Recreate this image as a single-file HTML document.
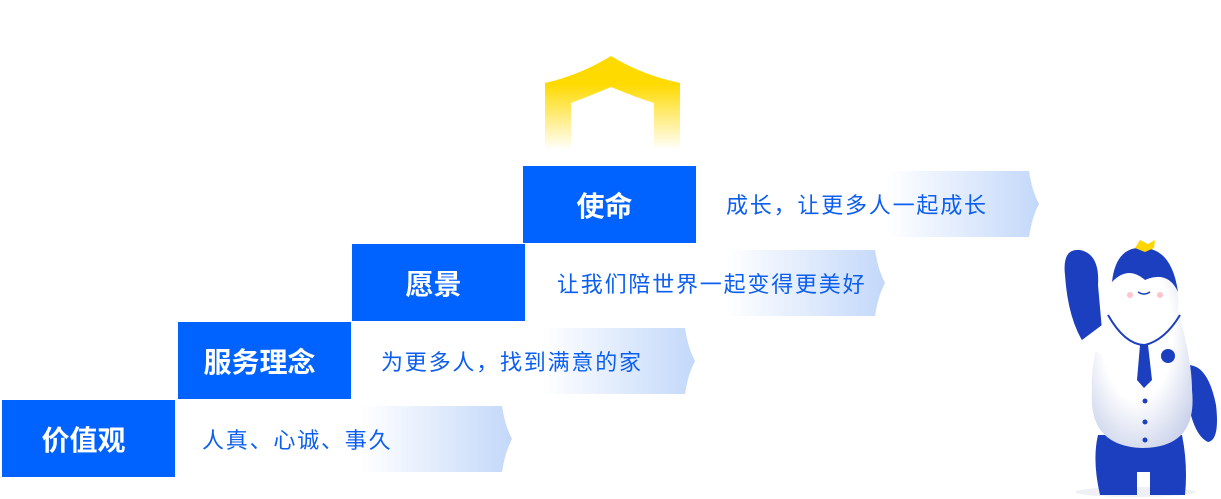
<!DOCTYPE html>
<html><head><meta charset="utf-8"><style>
body{margin:0;width:1221px;height:499px;background:#fff;position:relative;overflow:hidden;font-family:"Liberation Sans","Noto Sans CJK SC",sans-serif}
.box{position:absolute;width:173px;height:77px;background:#0062ff;color:#fff;font-weight:bold;font-size:28px;display:flex;align-items:center;justify-content:center}
.box span{position:relative;left:-5px}
.band{position:absolute;height:66px;color:#0b5ef0;font-size:22px;letter-spacing:1.8px;display:flex;align-items:center}
.band svg{position:absolute;left:0;top:0}
.band span{position:relative;padding-left:26px}
</style></head><body>
<svg style="position:absolute;left:540px;top:50px" width="150" height="110">
<defs><linearGradient id="y" x1="0" y1="0" x2="0" y2="1"><stop offset="0.3" stop-color="#ffda00"/><stop offset="1" stop-color="#ffda00" stop-opacity="0"/></linearGradient></defs>
<path d="M5 33 Q40 25 71 6 Q102 25 140 33 L140 100 L114 100 L114 53 Q95 47 71 37 Q47 47 31 53 L31 100 L5 100 Z" fill="url(#y)"/>
</svg>

<div class="box" style="left:2px;top:400px"><span>价值观</span></div>
<div class="box" style="left:178px;top:322px"><span>服务理念</span></div>
<div class="box" style="left:352px;top:244px"><span>愿景</span></div>
<div class="box" style="left:523px;top:166px"><span>使命</span></div>

<svg width="0" height="0" style="position:absolute"><defs><linearGradient id="b" x1="0" y1="0" x2="1" y2="0"><stop offset="0.55" stop-color="#fff"/><stop offset="1" stop-color="#c3d8fa"/></linearGradient></defs></svg>

<div class="band" style="left:700px;top:171px;width:340px"><svg width="340" height="66"><path d="M0 0H329Q332 20 339 33Q332 46 329 66H0Z" fill="url(#b)"/></svg><span>成长，让更多人一起成长</span></div>
<div class="band" style="left:531px;top:250px;width:356px"><svg width="356" height="66"><path d="M0 0H344Q347 20 354 33Q347 46 344 66H0Z" fill="url(#b)"/></svg><span>让我们陪世界一起变得更美好</span></div>
<div class="band" style="left:355px;top:328px;width:342px"><svg width="342" height="66"><path d="M0 0H330Q333 20 340 33Q333 46 330 66H0Z" fill="url(#b)"/></svg><span>为更多人，找到满意的家</span></div>
<div class="band" style="left:176px;top:406px;width:338px"><svg width="338" height="66"><path d="M0 0H326Q329 20 336 33Q329 46 326 66H0Z" fill="url(#b)"/></svg><span>人真、心诚、事久</span></div>

<svg style="position:absolute;left:1040px;top:230px" width="181" height="269">
<defs><radialGradient id="w" cx="0.45" cy="0.4" r="0.7"><stop offset="0.5" stop-color="#fff"/><stop offset="1" stop-color="#c8d0ea"/></radialGradient></defs>
<ellipse cx="95" cy="262" rx="60" ry="5" fill="#eef0f6"/>
<path d="M25 45 Q22 18 40 20 Q60 24 58 55 L62 100 L45 115 Q28 90 25 45Z" fill="#1c3fbf"/>
<path d="M148 135 Q168 135 176 175 Q180 210 168 212 Q152 205 146 160Z" fill="#1c3fbf"/>
<path d="M97 242 L97 265 L60 265 Q52 230 58 205 L142 205 Q148 235 145 265 L110 265 L110 242Z" fill="#1c3fbf"/>
<path d="M75 40 Q102 12 130 40 Q140 60 138 80 Q152 130 152 160 Q158 218 102 218 Q48 216 52 160 Q50 130 66 85 Q64 60 75 40Z" fill="url(#w)"/>
<path d="M42 110 L62 95 L66 125 L44 118Z" fill="#fff"/>
<path d="M72 52 Q76 15 105 18 Q132 20 138 62 Q128 40 105 50 Q88 35 72 52Z" fill="#1c3fbf"/>
<path d="M68 85 Q85 115 105 115 Q125 110 140 85" fill="none" stroke="#1c3fbf" stroke-width="2"/>
<path d="M100 115 L108 115 L112 150 L104 158 L97 150Z" fill="#1c3fbf"/>
<circle cx="128" cy="126" r="7" fill="#1c3fbf"/>
<circle cx="105" cy="171" r="2.5" fill="#1c3fbf"/><circle cx="105" cy="192" r="2.5" fill="#1c3fbf"/><circle cx="105" cy="210" r="2.5" fill="#1c3fbf"/>
<path d="M95 18 L100 10 L108 14 L115 10 L114 18 L105 22Z" fill="#ffd600"/>
<circle cx="90" cy="65" r="3" fill="#ffc4cc"/><circle cx="120" cy="65" r="3" fill="#ffc4cc"/>
<path d="M98 62 Q104 66 110 62" fill="none" stroke="#1c3fbf" stroke-width="1.5"/>
</svg>
</body></html>
